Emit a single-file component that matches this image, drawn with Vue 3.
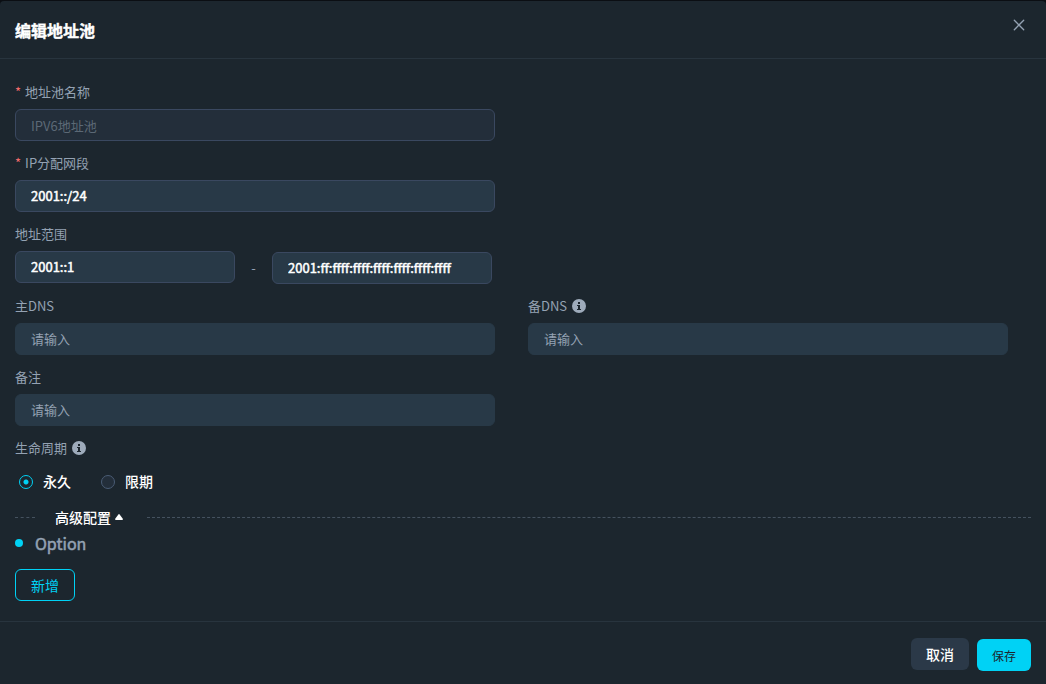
<script setup>
import { reactive, ref } from 'vue'

const form = reactive({
  name: 'IPV6地址池',
  segment: '2001::/24',
  start: '2001::1',
  end: '2001:ff:ffff:ffff:ffff:ffff:ffff:ffff',
  dns: '',
  backupDns: '',
  remark: '',
  life: 'forever',
})
const lives = [
  { value: 'forever', label: '永久' },
  { value: 'limited', label: '限期' },
]
const advanced = ref(true)
</script>

<template>
  <main class="dialog" role="dialog" aria-labelledby="title">
    <header class="header">
      <h1 id="title">编辑地址池</h1>
      <button class="close" type="button" aria-label="关闭">
        <svg width="12" height="12" viewBox="0 0 12 12" fill="none" stroke="currentColor" stroke-width="1.3" stroke-linecap="round">
          <path d="M1.3 1.3 10.7 10.7M10.7 1.3 1.3 10.7" />
        </svg>
      </button>
    </header>

    <form class="body" @submit.prevent>
      <div class="grid">
        <div class="field">
          <label for="name"><span class="star">*</span>地址池名称</label>
          <input id="name" v-model="form.name" class="text" type="text" disabled />
        </div>
        <div class="field first">
          <label for="segment"><span class="star">*</span>IP分配网段</label>
          <input id="segment" v-model="form.segment" class="text filled" type="text" />
        </div>
        <div class="field first">
          <label for="start">地址范围</label>
          <div class="range">
            <input id="start" v-model="form.start" class="text filled" type="text" />
            <span class="dash">-</span>
            <input v-model="form.end" class="text filled range-end" type="text" aria-label="结束地址" />
          </div>
        </div>
        <div class="field first">
          <label for="dns">主DNS</label>
          <input id="dns" v-model="form.dns" class="text" type="text" placeholder="请输入" />
        </div>
        <div class="field">
          <label for="backup">备DNS
            <svg class="info" width="14" height="14" viewBox="0 0 14 14">
              <circle cx="7" cy="7" r="7" fill="#9eabbb" />
              <path d="M6 3h2v2H6zM5 6h3v4h1v1H5v-1h1V7H5z" fill="#1c262e" />
            </svg>
          </label>
          <input id="backup" v-model="form.backupDns" class="text" type="text" placeholder="请输入" />
        </div>
        <div class="field first">
          <label for="remark">备注</label>
          <input id="remark" v-model="form.remark" class="text" type="text" placeholder="请输入" />
        </div>
      </div>

      <fieldset class="life">
        <legend>生命周期
          <svg class="info" width="14" height="14" viewBox="0 0 14 14">
            <circle cx="7" cy="7" r="7" fill="#9eabbb" />
            <path d="M6 3h2v2H6zM5 6h3v4h1v1H5v-1h1V7H5z" fill="#1c262e" />
          </svg>
        </legend>
        <div class="radios">
          <label v-for="item in lives" :key="item.value" class="radio">
            <input v-model="form.life" type="radio" name="life" :value="item.value" />
            <span>{{ item.label }}</span>
          </label>
        </div>
      </fieldset>

      <div class="divider">
        <button type="button" class="toggle" :aria-expanded="advanced" @click="advanced = !advanced">
          高级配置
          <svg width="8" height="6" viewBox="0 0 8 6" fill="currentColor"><path d="M3.4.4Q4-.2 4.6.4L7.8 4.8Q8 6 7 6H1Q0 6 .2 4.8Z" /></svg>
        </button>
      </div>

      <section v-if="advanced">
        <h2 class="option">Option</h2>
        <button type="button" class="add">新增</button>
      </section>
    </form>

    <footer class="footer">
      <button type="button" class="btn cancel">取消</button>
      <button type="button" class="btn save">保存</button>
    </footer>
  </main>
</template>

<style>
body {
  margin: 0;
  background: #0b0e13;
}
</style>

<style scoped>
.dialog {
  box-sizing: border-box;
  margin-top: 1px;
  min-height: calc(100vh - 1px);
  border-radius: 4px 4px 0 0;
  background: #1c262e;
  color: #94a2b3;
  font: 13px/20px "Noto Sans CJK SC", sans-serif;
}
button,
input {
  box-sizing: border-box;
  font-family: inherit;
}
button {
  cursor: pointer;
}
.header {
  display: flex;
  align-items: flex-start;
  justify-content: space-between;
  padding: 17px 15px 16px;
  border-bottom: 1px solid #28343e;
}
h1 {
  margin: 0;
  color: #fff;
  font-size: 16px;
  line-height: 24px;
  font-weight: 700;
  -webkit-text-stroke: 0.4px currentColor;
}
.close {
  display: flex;
  padding: 6px;
  margin: -5px 0 0;
  border: 0;
  background: none;
  color: #94a2b3;
}
.body {
  padding: 23px 15px 20px;
}
.grid {
  display: grid;
  grid-template-columns: 1fr 1fr;
  gap: 12px 33px;
  padding-right: 23px;
}
.first {
  grid-column: 1;
}
.field {
  min-width: 0;
}
.field > label {
  display: flex;
  align-items: center;
  gap: 5px;
  margin-bottom: 7px;
}
.field > label:has(.star) {
  gap: 4px;
}
.star {
  color: #f56c6c;
}
.info {
  flex: none;
}
.text {
  display: block;
  width: 100%;
  height: 32px;
  padding: 0 15px 2px;
  border: 1px solid #283947;
  border-radius: 6px;
  outline: none;
  background: #283947;
  color: #fff;
  font-size: 13px;
}
.text::placeholder {
  color: #94a2b3;
  opacity: 1;
}
.text:disabled {
  padding-bottom: 0;
  border-color: #3a4860;
  background: #232e3a;
  color: #5c6976;
}
.filled {
  border-color: #3a4860;
  font-weight: 400;
  -webkit-text-stroke: 0.5px currentColor;
}
.range {
  display: grid;
  grid-template-columns: 1fr 37px 1fr;
  min-height: 33px;
  padding-right: 3px;
}
.range-end {
  align-self: end;
}
.dash {
  align-self: center;
  text-align: center;
}
.life {
  margin: 12px 0 0;
  padding: 0;
  border: 0;
}
.life legend {
  display: flex;
  align-items: center;
  gap: 5px;
  padding: 0;
}
.radios {
  display: flex;
  gap: 30px;
  padding: 13px 4px 0;
}
.radio {
  display: flex;
  align-items: center;
  gap: 10px;
  color: #fff;
  font-size: 14px;
  font-weight: 500;
}
.radio input {
  appearance: none;
  width: 14px;
  height: 14px;
  margin: 2px 0 0;
  border: 1px solid #4a5c75;
  border-radius: 50%;
  background: #232e3a;
}
.radio input:checked {
  border-color: #00d2f5;
  background: radial-gradient(circle, #00d2f5 2px, #1c262e 3px);
}
.divider {
  display: flex;
  align-items: center;
  margin-top: 15px;
}
.divider::before,
.divider::after {
  content: "";
  border-top: 1px dashed #45525f;
}
.divider::before {
  width: 20px;
}
.divider::after {
  flex: 1;
}
.toggle {
  display: flex;
  align-items: center;
  gap: 4px;
  padding: 0 24px 0 20px;
  border: 0;
  background: none;
  color: #fff;
  font-size: 14px;
  line-height: 22px;
  font-weight: 500;
}
.option {
  display: flex;
  align-items: center;
  gap: 12px;
  margin: 3px 0 14px;
  font-size: 16px;
  line-height: 24px;
  font-weight: 400;
  -webkit-text-stroke: 0.5px currentColor;
}
.option::before {
  content: "";
  width: 8px;
  height: 8px;
  border-radius: 50%;
  background: #00d2f5;
}
.add {
  display: block;
  height: 32px;
  padding: 0 15px;
  border: 1px solid #00d2f5;
  border-radius: 6px;
  background: none;
  color: #00d2f5;
  font-size: 14px;
}
.footer {
  display: flex;
  justify-content: flex-end;
  gap: 8px;
  padding: 16px 15px 12px;
  border-top: 1px solid #28343e;
}
.btn {
  height: 32px;
  padding: 0 15px;
  border: 0;
  border-radius: 6px;
}
.cancel {
  background: #2b3948;
  color: #fff;
  font-size: 14px;
  font-weight: 500;
}
.save {
  margin-top: 1px;
  background: #00d2f5;
  color: #1c262e;
  font-size: 12px;
}
</style>
